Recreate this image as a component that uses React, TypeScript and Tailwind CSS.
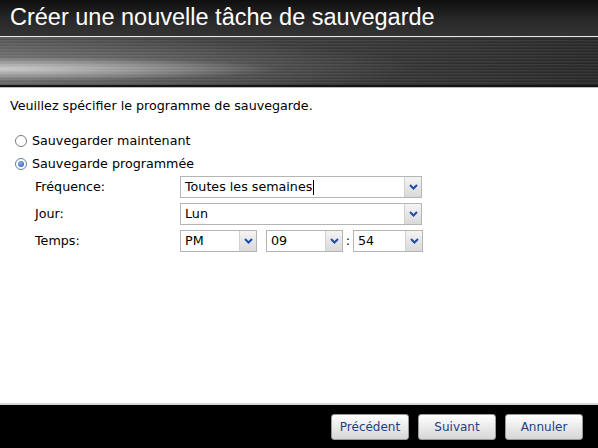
import React from "react";

function Chevron() {
  return (
    <svg width="9" height="6" viewBox="0 0 9 6">
      <path d="M1 1 L4.5 4.5 L8 1" fill="none" stroke="#1d4fa8" strokeWidth="2" />
    </svg>
  );
}

function Select({ value, w, cursor }: { value: string; w: string; cursor?: boolean }) {
  return (
    <div className={`flex h-[22px] ${w} border border-[#b5b5b5] bg-white`}>
      <div className="flex flex-1 items-center pl-[4px] text-[12.7px] text-black">
        {value}
        {cursor && <span className="ml-[1px] inline-block h-[15px] w-[1px] bg-black" />}
      </div>
      <div className="flex w-[17px] items-center justify-center border-l border-[#d0d0d0] bg-[linear-gradient(to_bottom,#f4f4f4,#d9d9d9)]">
        <Chevron />
      </div>
    </div>
  );
}

function Btn({ label }: { label: string }) {
  return (
    <div className="flex h-[26px] w-[78px] items-center justify-center rounded-[3px] border border-[#9a9a9a] bg-[linear-gradient(to_bottom,#ffffff,#e6e6e6_60%,#d6d6d6)] text-[12px] text-[#1f3f7f]">
      {label}
    </div>
  );
}

export default function App() {
  return (
    <div className="flex h-[448px] w-[598px] flex-col bg-white font-['DejaVu_Sans',sans-serif]">
      <div className="flex h-[36px] items-center bg-[linear-gradient(to_bottom,#0f0f0f,#2a2a2a_60%,#333333)] pl-[10px]">
        <span className="font-['URW_Gothic','Century_Gothic','Liberation_Sans',sans-serif] text-[23.5px] leading-none text-white">
          Créer une nouvelle tâche de sauvegarde
        </span>
      </div>
      <div className="h-[1px] bg-[#e8e8e8]" />
      <div className="h-[48px] bg-[radial-gradient(ellipse_280px_12px_at_0px_32px,rgba(235,235,235,0.7),rgba(255,255,255,0)),radial-gradient(ellipse_420px_30px_at_0px_30px,rgba(200,200,200,0.35),rgba(255,255,255,0)),repeating-linear-gradient(to_bottom,rgba(255,255,255,0.07)_0px,rgba(255,255,255,0.07)_1px,rgba(0,0,0,0.1)_2px,rgba(0,0,0,0)_3px),linear-gradient(to_right,#555555,#3d3d3d_45%,#292929)]" />
      <div className="h-[2px] bg-[#141414]" />
      <div className="h-[1px] bg-[#bdbdbd]" />
      <div className="flex flex-1 flex-col px-[10px] pt-[10px] text-[12.7px] text-black">
        <div className="h-[16px] leading-[16px]">Veuillez spécifier le programme de sauvegarde.</div>
        <div className="mt-[19px] flex h-[16px] items-center gap-[5px] pl-[5px]">
          <span className="inline-block h-[12px] w-[12px] rounded-full border border-[#7a7a7a] bg-white" />
          <span>Sauvegarder maintenant</span>
        </div>
        <div className="mt-[7px] flex h-[16px] items-center gap-[5px] pl-[5px]">
          <span className="flex h-[12px] w-[12px] items-center justify-center rounded-full border border-[#5a7fa8] bg-white">
            <span className="h-[6px] w-[6px] rounded-full bg-[radial-gradient(circle_at_40%_35%,#8ab4ea,#1d55b0)]" />
          </span>
          <span>Sauvegarde programmée</span>
        </div>
        <div className="mt-[4px] grid grid-cols-[145px_auto] gap-y-[5px] pl-[25px]">
          <div className="flex items-center">Fréquence:</div>
          <Select value="Toutes les semaines" w="w-[242px]" cursor />
          <div className="flex items-center">Jour:</div>
          <Select value="Lun" w="w-[242px]" />
          <div className="flex items-center">Temps:</div>
          <div className="flex items-center">
            <Select value="PM" w="w-[77px]" />
            <div className="ml-[9px]">
              <Select value="09" w="w-[77px]" />
            </div>
            <span className="w-[10px] text-center">:</span>
            <Select value="54" w="w-[70px]" />
          </div>
        </div>
      </div>
      <div className="h-[2px] bg-[#d6d6d6]" />
      <div className="flex h-[43px] items-center justify-end gap-[9px] bg-black pr-[15px]">
        <Btn label="Précédent" />
        <Btn label="Suivant" />
        <Btn label="Annuler" />
      </div>
    </div>
  );
}
